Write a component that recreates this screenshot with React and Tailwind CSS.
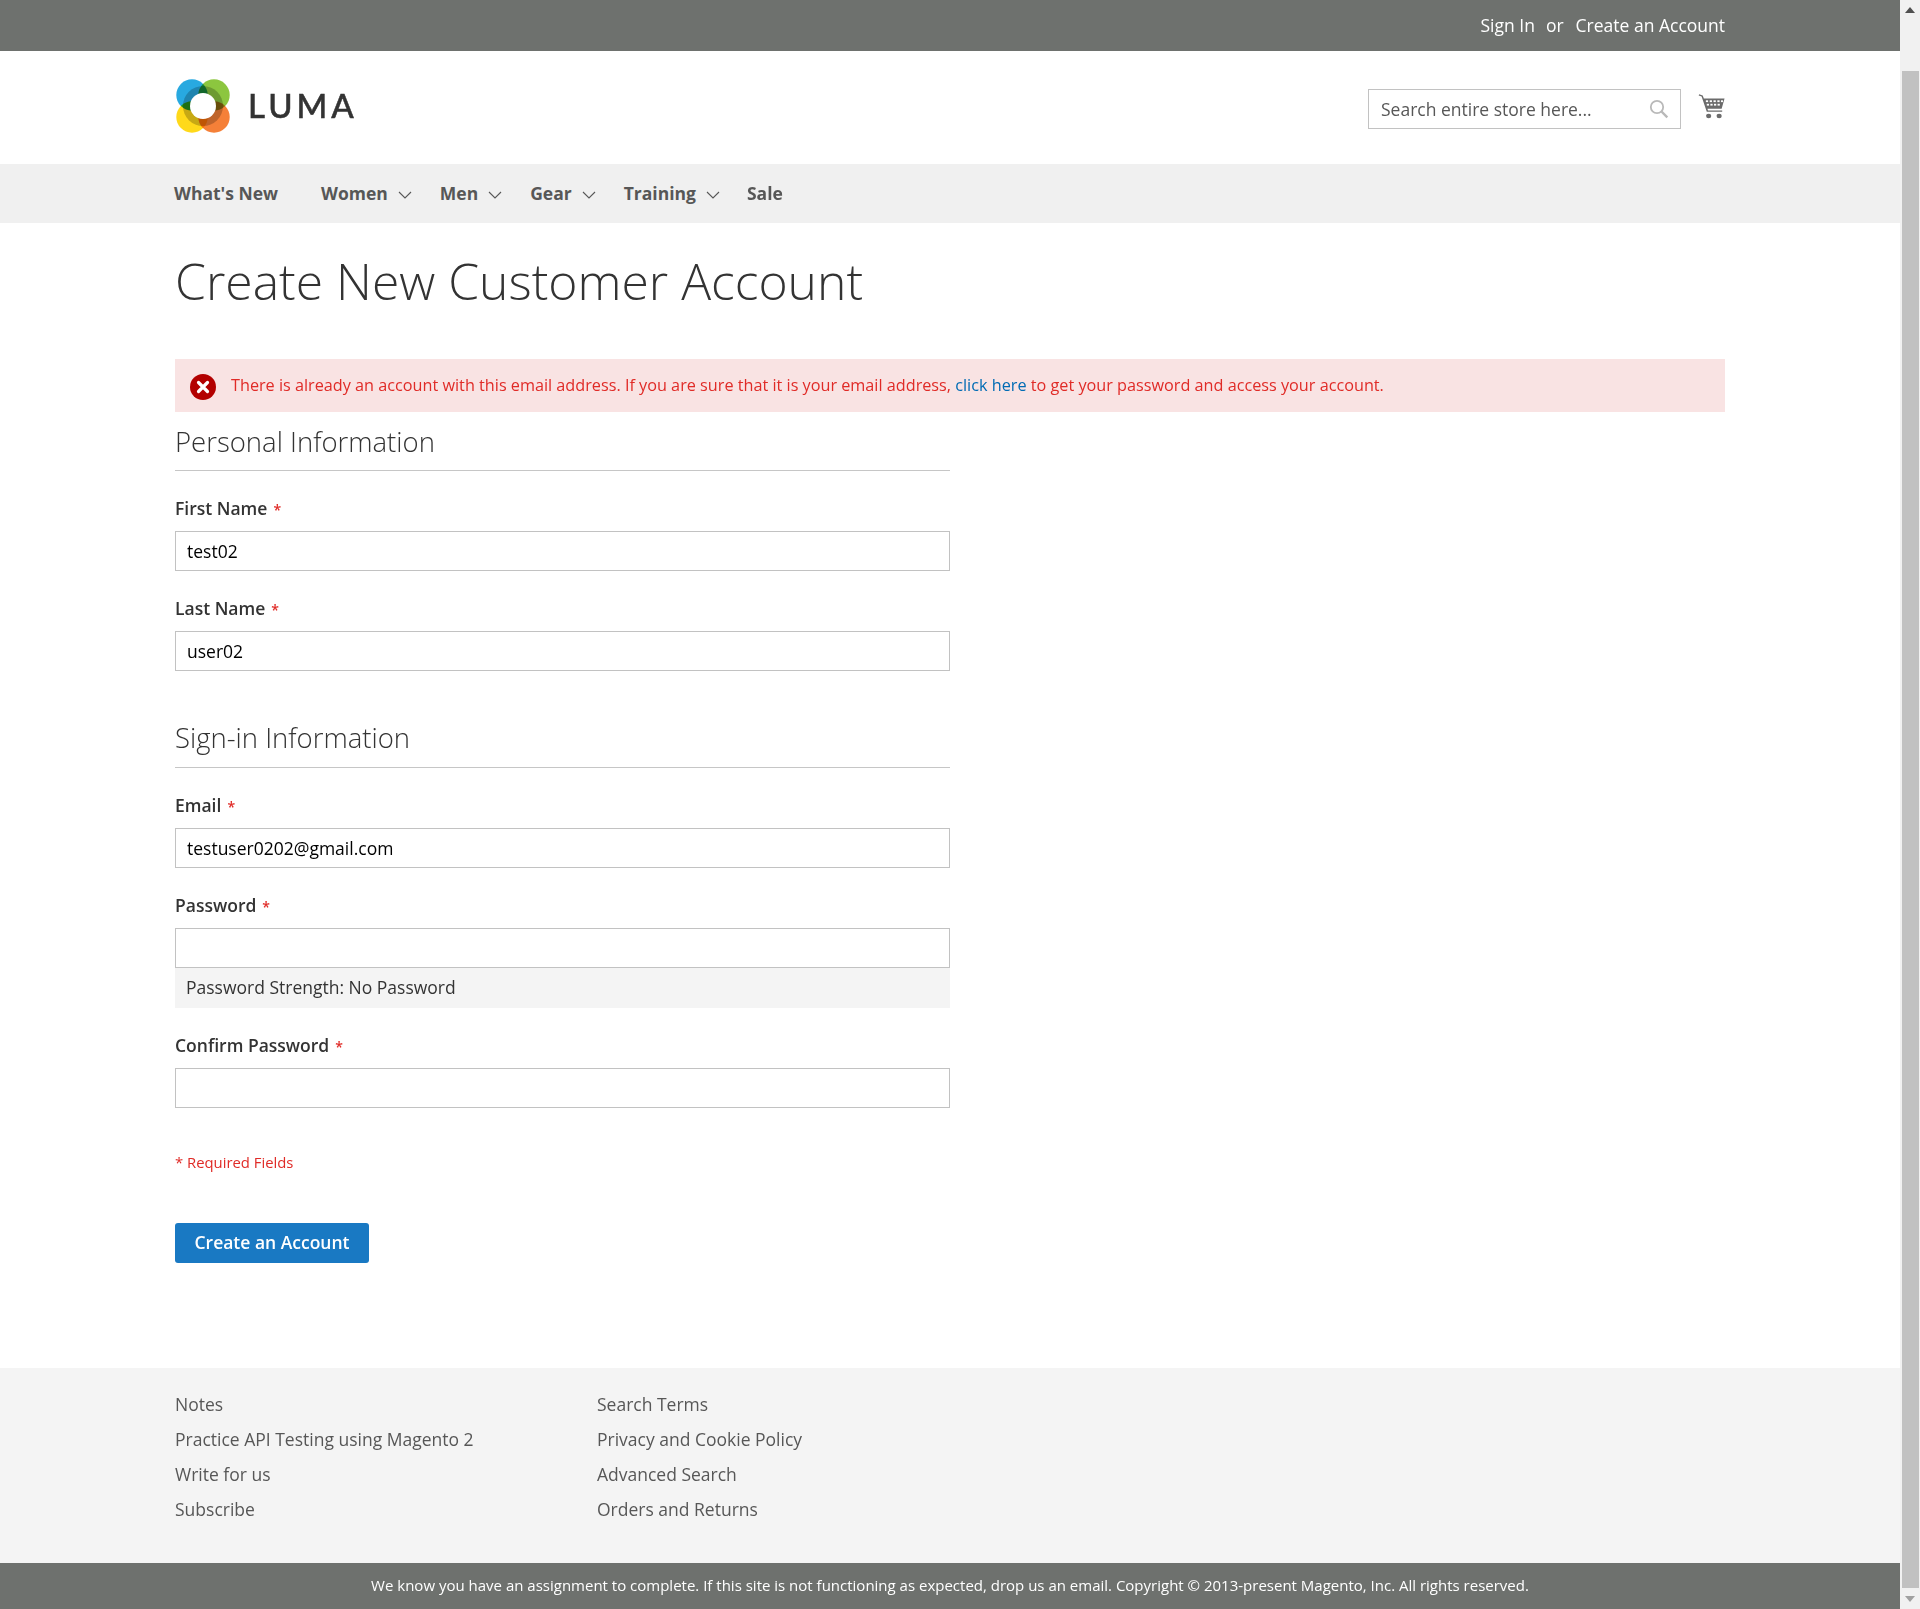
function Chevron() {
  return (
    <svg width="14" height="8" viewBox="0 0 14 8" fill="none" stroke="#575757" strokeWidth="1.1" className="ml-[10px] mt-[3px]">
      <path d="M1 1l6 6 6-6" />
    </svg>
  );
}

function Logo() {
  return (
    <svg width="54" height="54" viewBox="0 0 54 54" className="block">
      <g style={{ isolation: "isolate" }}>
        <circle cx="16" cy="16" r="15.7" fill="#28a9e0" className="mix-blend-multiply" />
        <circle cx="38" cy="16" r="15.7" fill="#8cc63f" className="mix-blend-multiply" />
        <circle cx="16" cy="38" r="15.7" fill="#ffd91a" className="mix-blend-multiply" />
        <circle cx="38" cy="38" r="15.7" fill="#f58038" className="mix-blend-multiply" />
      </g>
      <circle cx="27" cy="27" r="20" fill="#000" fillOpacity="0.22" />
      <circle cx="27" cy="27" r="13" fill="#fff" />
    </svg>
  );
}

function Cart() {
  return (
    <svg width="27" height="26" viewBox="0 0 24 26" preserveAspectRatio="none" fill="#6b6b6b">
      <path d="M1 1.2l3.2 1.2 1 3.1H23.6l-2.6 10.2H8.4l.5 1.8h12.6v1.3H7.8L3.2 3.6.6 2.5z" />
      <g fill="#fff">
        <rect x="7" y="7.3" width="2" height="1.8" /><rect x="10.4" y="7.3" width="2" height="1.8" /><rect x="13.8" y="7.3" width="2" height="1.8" /><rect x="17.2" y="7.3" width="2" height="1.8" /><rect x="20.4" y="7.3" width="1.8" height="1.8" />
        <rect x="7.8" y="10.8" width="2" height="1.8" /><rect x="11" y="10.8" width="2" height="1.8" /><rect x="14.2" y="10.8" width="2" height="1.8" /><rect x="17.4" y="10.8" width="2" height="1.8" />
      </g>
      <circle cx="9.5" cy="23" r="2.3" /><circle cx="18.8" cy="23" r="2.3" />
    </svg>
  );
}

function Field({ label, value, className = "" }) {
  return (
    <div className={className}>
      <label className="block h-[22px] text-[17.5px] leading-[22px] font-semibold text-[#333333]">
        {label}<span className="ml-[6px] text-[14px] text-[#e02b27]">*</span>
      </label>
      <input
        readOnly
        defaultValue={value}
        className="mt-[12px] block h-[40px] w-full border border-[#c2c2c2] bg-white px-[11px] text-[17.5px] text-black outline-none"
      />
    </div>
  );
}

function Heading({ children, className = "" }) {
  return (
    <div className={"border-b border-[#c6c6c6] text-[27.5px] font-light leading-[34px] text-[#333333] " + className}>
      {children}
    </div>
  );
}

function NavItem({ children, chevron, className = "" }) {
  return (
    <a className={"flex items-center " + className}>
      {children}
      {chevron && <Chevron />}
    </a>
  );
}

export default function App() {
  return (
    <div className="flex h-[1609px] w-full overflow-hidden bg-white text-[16px] text-[#333333] [font-family:'Open_Sans',sans-serif]">
      <div className="flex min-w-0 flex-1 flex-col">
        <div className="h-[51px] bg-[#6e716e]">
          <div className="mx-auto flex h-full w-[1550px] items-center justify-end text-[17.5px] text-white">
            <a>Sign In</a>
            <span className="ml-[11px] mr-[12px]">or</span>
            <a>Create an Account</a>
          </div>
        </div>

        <header className="mx-auto flex h-[113px] w-[1550px] items-start justify-between">
          <div className="ml-[1px] mt-[28px] flex items-center">
            <Logo />
            <span className="-mt-[2px] ml-[18px] text-[33px] font-medium leading-none tracking-[4px] text-[#333333] [-webkit-text-stroke:0.5px_#333333] [font-family:Lato,sans-serif]">LUMA</span>
          </div>
          <div className="mt-[38px] flex items-start">
            <div className="relative w-[313px]">
              <input
                readOnly
                placeholder="Search entire store here..."
                className="block h-[40px] w-full border border-[#c2c2c2] bg-white pl-[12px] pr-[40px] text-[17.5px] text-black outline-none placeholder:text-[#575757]"
              />
              <svg width="20" height="20" viewBox="0 0 20 20" fill="none" stroke="#b9b9b9" strokeWidth="1.8" className="absolute right-[12px] top-[10px]">
                <circle cx="8" cy="8" r="6.2" />
                <path d="M12.5 12.5l5.8 5.8" strokeWidth="2.4" />
              </svg>
            </div>
            <div className="ml-[17px] mt-[4px]"><Cart /></div>
          </div>
        </header>

        <nav className="h-[59px] bg-[#f0f0f0]">
          <div className="mx-auto flex h-full w-[1550px] items-center text-[17.5px] font-bold text-[#575757]">
            <NavItem className="-ml-px">What's New</NavItem>
            <NavItem chevron className="ml-[43px]">Women</NavItem>
            <NavItem chevron className="ml-[28px]">Men</NavItem>
            <NavItem chevron className="ml-[28px]">Gear</NavItem>
            <NavItem chevron className="ml-[28px]">Training</NavItem>
            <NavItem className="ml-[27px]">Sale</NavItem>
          </div>
        </nav>

        <main className="mx-auto w-[1550px] flex-1">
          <h1 className="mt-[28px] h-[60px] text-[49.8px] font-light leading-[60px] text-[#333333]">Create New Customer Account</h1>

          <div className="mt-[48px] flex h-[53px] items-center bg-[#f9e3e3] pl-[15px] text-[16.23px] text-[#e02b27]">
            <svg width="26" height="26" viewBox="0 0 26 26" className="mt-[2px] shrink-0">
              <circle cx="13" cy="13" r="13" fill="#b30000" />
              <path d="M8.5 8.5l9 9M17.5 8.5l-9 9" stroke="#fff" strokeWidth="3.2" strokeLinecap="round" />
            </svg>
            <span className="ml-[15px]">
              There is already an account with this email address. If you are sure that it is your email address, <a className="text-[#006bb4]">click here</a> to get your password and access your account.
            </span>
          </div>

          <form className="w-[775px]">
            <Heading className="mt-[13px] h-[46px]">Personal Information</Heading>
            <Field label="First Name" value="test02" className="mt-[26px]" />
            <Field label="Last Name" value="user02" className="mt-[26px]" />

            <Heading className="mt-[50px] h-[47px]">Sign-in Information</Heading>
            <Field label="Email" value="testuser0202@gmail.com" className="mt-[26px]" />
            <Field label="Password" value="" className="mt-[26px]" />
            <div className="flex h-[40px] items-center bg-[#f4f4f4] pb-[2px] pl-[11px] text-[17.5px] text-[#333333]">Password Strength: No Password</div>
            <Field label="Confirm Password" value="" className="mt-[26px]" />

            <div className="mt-[44px] text-[14.85px] leading-[20px] text-[#e02b27]">* Required Fields</div>
            <button type="button" className="mt-[51px] block h-[40px] w-[194px] rounded-[3px] bg-[#1979c3] pb-[2px] text-[17.5px] font-semibold text-white">Create an Account</button>
          </form>
        </main>

        <footer className="h-[195px] bg-[#f4f4f4]">
          <div className="mx-auto flex w-[1550px] pt-[19px] text-[17.5px] leading-[35px] text-[#575757]">
            <ul className="w-[422px]">
              <li>Notes</li>
              <li>Practice API Testing using Magento 2</li>
              <li>Write for us</li>
              <li>Subscribe</li>
            </ul>
            <ul>
              <li>Search Terms</li>
              <li>Privacy and Cookie Policy</li>
              <li>Advanced Search</li>
              <li>Orders and Returns</li>
            </ul>
          </div>
        </footer>
        <div className="flex h-[46px] items-center justify-center bg-[#6e716e] pb-[2px] text-[15px] text-white">
          We know you have an assignment to complete. If this site is not functioning as expected, drop us an email. Copyright © 2013-present Magento, Inc. All rights reserved.
        </div>
      </div>

      <aside className="flex h-full w-[20px] shrink-0 flex-col items-center bg-[#f1f1f1]">
        <div className="flex h-[19px] items-center justify-center">
          <svg width="10" height="6" viewBox="0 0 10 6" fill="#505050"><path d="M5 0l5 6H0z" /></svg>
        </div>
        <div className="mt-[52px] h-[1517px] w-[17px] bg-[#c1c1c1]" />
        <div className="flex flex-1 items-center justify-center">
          <svg width="10" height="6" viewBox="0 0 10 6" fill="#a0a0a0"><path d="M0 0h10L5 6z" /></svg>
        </div>
      </aside>
    </div>
  );
}
